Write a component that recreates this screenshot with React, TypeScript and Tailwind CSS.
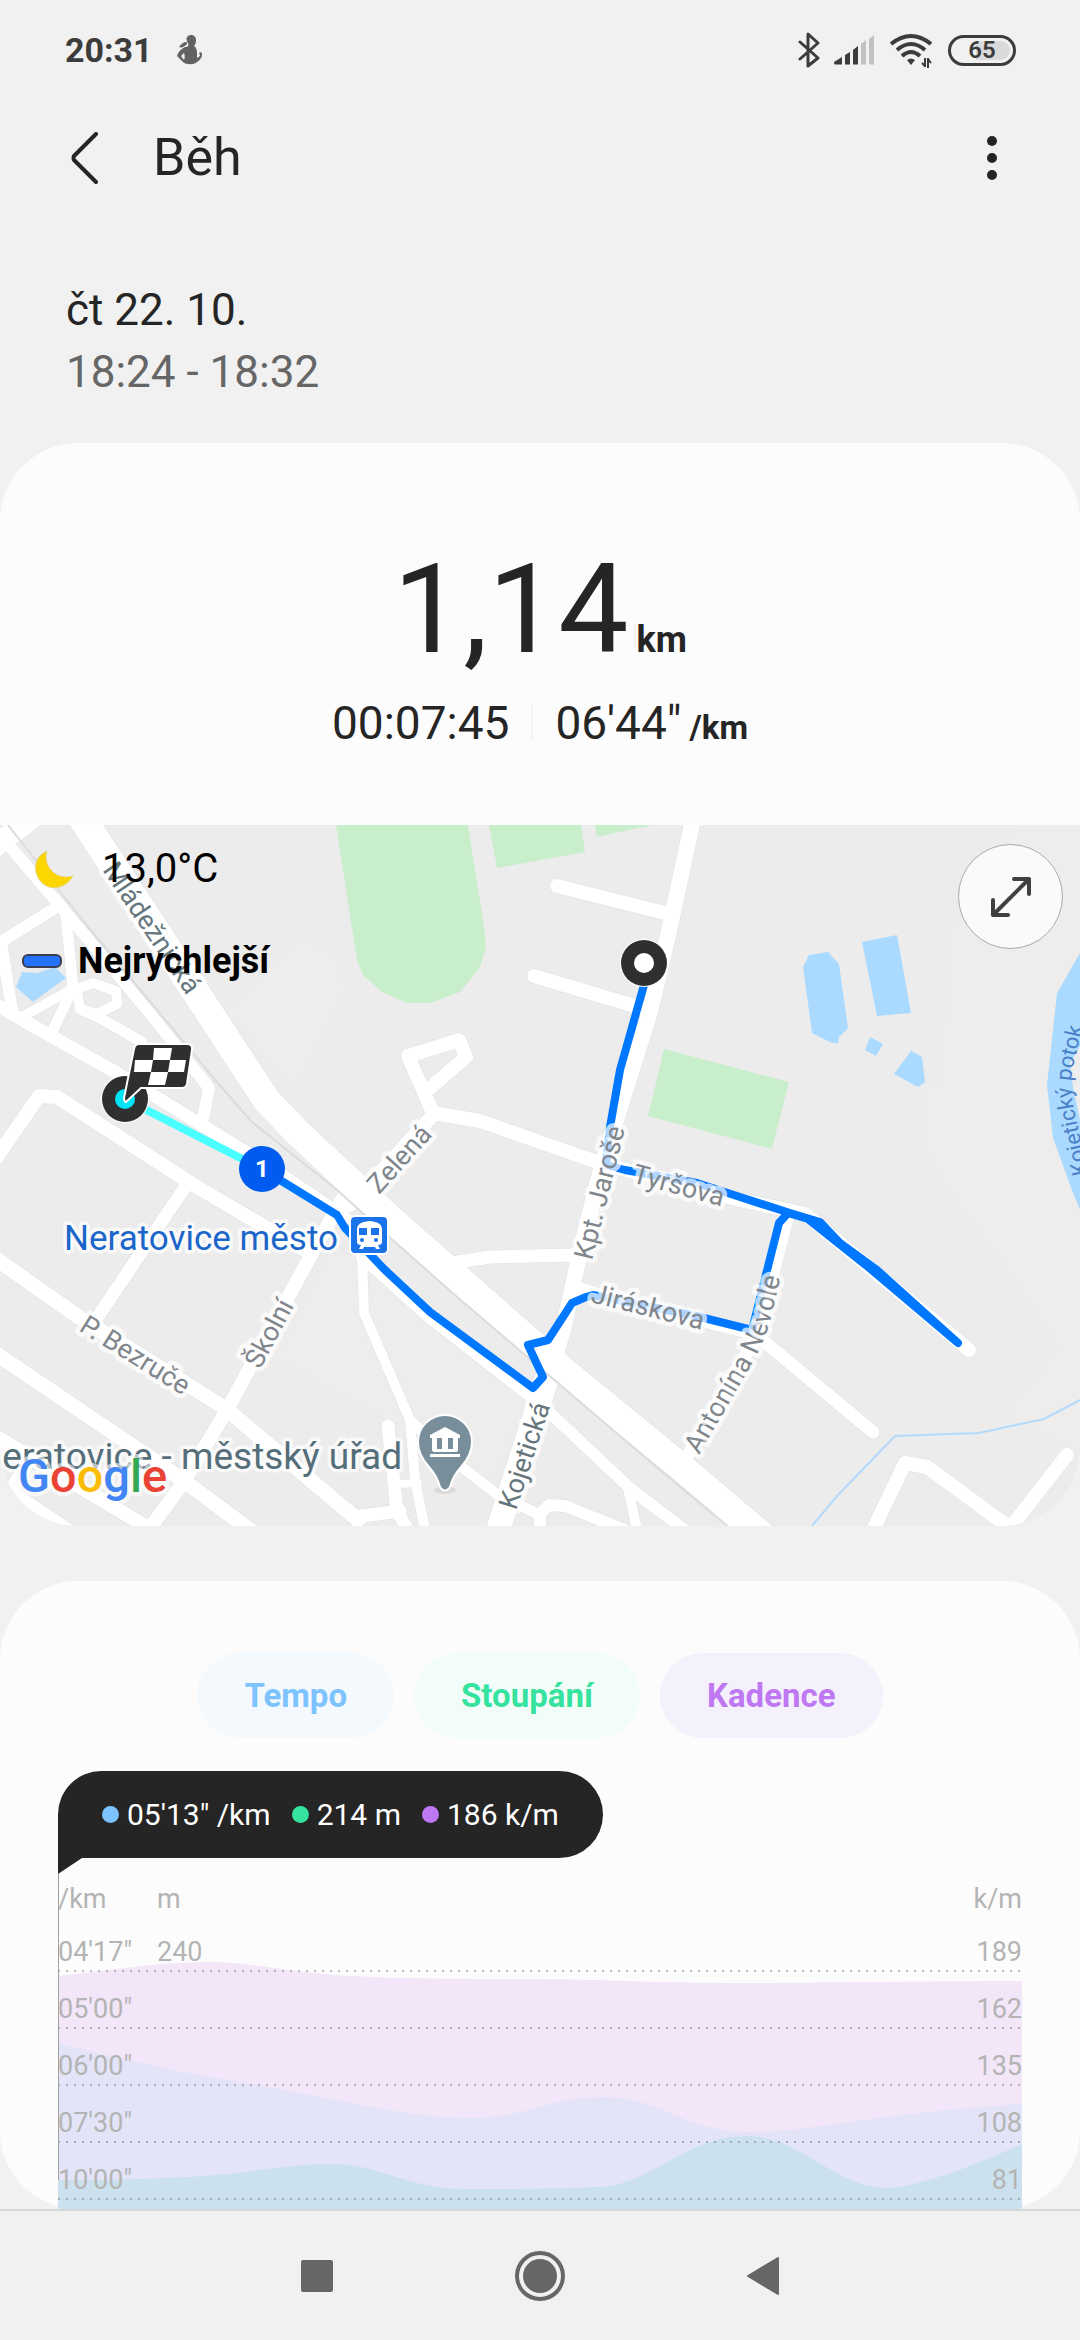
import React from 'react';

const axisRows = [
    { pace: "04'17\"", elevation: '240', cadence: '189' },
    { pace: "05'00\"", elevation: '', cadence: '162' },
    { pace: "06'00\"", elevation: '', cadence: '135' },
    { pace: "07'30\"", elevation: '', cadence: '108' },
    { pace: "10'00\"", elevation: '', cadence: '81' },
];

const gridLines = [97, 154, 211, 268, 325];

const tooltipValues = [
    { value: "05'13\" /km", dot: 'bg-[#7cc3ff]' },
    { value: '214 m', dot: 'bg-[#35e29e]' },
    { value: '186 k/m', dot: 'bg-[#bf78f2]' },
];

const series = [
    { label: 'Tempo', className: 'bg-[#f4f9fd] text-[#7cc3ff]' },
    { label: 'Stoupání', className: 'bg-[#f2fdf9] text-[#35e29e]' },
    { label: 'Kadence', className: 'bg-[#f4f0fc] text-[#bf78f2]' },
];

// Map geometry, widest roads first
const roads = [
    { width: 28, d: 'M80 815L267 1101L300 1135L387 1216L560 1368L680 1466L760 1534' },
    { width: 24, d: 'M548 1375L536 1412L498 1530' },
    { width: 22, d: 'M-10 850L45 808' },
    { width: 16, d: 'M694 815L667 940L650 1012L616 1120L598 1180L578 1262L563 1330L548 1380' },
    { width: 15, d: 'M-5 1258L80 1318L225 1408L358 1520' },
    { width: 15, d: 'M-5 1353L180 1478L250 1530' },
    { width: 14, d: 'M-5 1436L145 1526' },
    { width: 14, d: 'M28 1462L5 1500' },
    { width: 18, d: 'M-5 1484L70 1534' },
    { width: 14, d: 'M-8 1164L39 1096L57 1097L197 1187L308 1252' },
    { width: 13, d: 'M185 1187L97 1318' },
    { width: 14, d: 'M344 1196L310 1257L227 1410L183 1483L147 1532' },
    { width: 12, d: 'M6 842L62 908L118 975L165 1032L209 1088L202 1124' },
    { width: 12, d: 'M60 905L1 942L12 1010' },
    { width: 13, d: 'M-5 1004L33 1026L117 1073L262 1162L345 1218' },
    { width: 11, d: 'M66 915L73 988L51 1034' },
    { width: 10, d: 'M74 988L20 1018' },
    { width: 10, d: 'M74 990L93 983L116 991L117 1004L97 1014L80 1009L77 990' },
    { width: 11, d: 'M80 1009L100 1018L142 1042' },
    { width: 10, d: 'M362 1255L364 1313L410 1420L415 1480L425 1530' },
    { width: 13, d: 'M388 1426L397 1511L408 1530' },
    { width: 13, d: 'M355 1517L400 1511' },
    { width: 8, d: 'M400 1484L418 1483' },
    { width: 11, d: 'M413 1423L463 1468L498 1495L538 1514' },
    { width: 12, d: 'M540 1530L540 1514L549 1505L565 1506L625 1530' },
    { width: 12, d: 'M362 1257L430 1318L530 1396L549 1412L632 1490L690 1534' },
    { width: 10, d: 'M628 1488L637 1530' },
    { width: 14, d: 'M557 886L665 913' },
    { width: 14, d: 'M534 976L645 1009' },
    { width: 14, d: 'M430 1088L466 1057L459 1040L408 1056L433 1113' },
    { width: 14, d: 'M433 1113L480 1121L600 1163L740 1200L805 1214L969 1350' },
    { width: 14, d: 'M435 1113L350 1205' },
    { width: 13, d: 'M572 1286L593 1293L755 1334L873 1432' },
    { width: 13, d: 'M788 1215L757 1335L688 1455' },
    { width: 13, d: 'M445 1264L490 1257L577 1255' },
    { width: 14, d: 'M872 1532L905 1463L927 1467L1010 1528L1067 1455' },
];

const greens = [
    'M336 825L357 960L363 975L382 992L407 1003H430L460 992L480 967L486 947L485 933L468 825Z',
    'M489 825L497 868L585 852L581 825Z',
    'M595 825L597 837L653 825Z',
    'M664 1049L789 1082L772 1149L648 1116Z',
];

const waters = [
    'M22 972L37 973L55 967L66 978L33 1002L16 987Z',
    'M809 955L828 952L839 964L848 1028L839 1037L838 1043H832L812 1033L803 967Z',
    'M862 942L897 935L911 1013L877 1016Z',
    'M870 1037L883 1044L876 1056L865 1050Z',
    'M911 1051L922 1057L925 1082L918 1087L894 1074Z',
    'M1080 953L1057 993L1047 1085L1053 1138L1072 1190L1080 1210V1120L1073 1087L1070 1063L1080 1046Z',
];

const routePath =
    'M644 985L620 1070L610 1127L606 1165L625 1170L697 1183L740 1197L790 1213L820 1222L840 1243L877 1270L958 1343L867 1266L808 1219L788 1213L779 1223L752 1330L700 1317L593 1295L586 1297L572 1303L548 1340L528 1345L543 1377L533 1388L430 1312L384 1269L345 1228L337 1215L262 1169';

const streetLabels = [
    { text: 'Mládežnická', transform: 'translate(102 870) rotate(56)', fill: '#65767d' },
    { text: 'Zelená', transform: 'translate(379 1195) rotate(-48)', fill: '#80868b' },
    { text: 'Kpt. Jaroše', transform: 'translate(592 1261) rotate(-76)', fill: '#80868b' },
    { text: 'Tyršova', transform: 'translate(631 1182) rotate(15)', fill: '#80868b' },
    { text: 'Jiráskova', transform: 'translate(590 1302) rotate(14)', fill: '#80868b' },
    { text: 'Kojetická', transform: 'translate(516 1511) rotate(-72)', fill: '#65767d' },
    { text: 'Školní', transform: 'translate(260 1370) rotate(-62)', fill: '#80868b' },
    { text: 'P. Bezruče', transform: 'translate(78 1330) rotate(32)', fill: '#80868b' },
];

const StatusBar: React.FC = () => (
    <div className="flex h-[100px] items-center justify-between pr-16 pl-[65px] text-[#3c3c3c]">
        <div className="flex items-center gap-6">
            <span className="text-[34px] font-bold">20:31</span>
            <svg className="h-[30px] w-[26px]" viewBox="0 0 26 30" fill="#626262">
                <path d="M14 0c3 0 5 2 5 5s-1 5-2 6c2 1 3 4 3 7v5c2-1 3-2 3-3l-1-2c1-1 3-1 3 1 0 4-2 6-5 8-3 3-11 3-14 0L0 21c1-4 4-7 8-9 3 0 4-1 3-4-3-4-1-8 3-8zM7 18l-3 3 3 4c1-2 1-5 0-7z" />
                <path d="M10 7c-4 0-6 2-8 5 3 1 5 0 8-3z" />
            </svg>
        </div>
        <div className="flex items-center">
            <svg className="mr-3.5 h-[36px] w-[22px]" viewBox="0 0 22 36" fill="none" stroke="currentColor" strokeWidth="3" strokeLinejoin="round" strokeLinecap="round">
                <path d="M2 10L20 26L10 34V2L20 11L2 27" />
            </svg>
            <svg className="mr-4 h-[30px] w-[40px]" viewBox="0 0 40 30" fill="currentColor">
                <path d="M0 27L8 22V29.500H1Q0 29 0 27zM11 20L16 17V29.500H11zM19 15L24 11V29.500H19z" />
                <path fill="#c2c2c2" d="M27 9L32 5V29.500H27zM35 4L40 0V29.500H35z" />
            </svg>
            <svg className="mr-4 h-[36px] w-[42px]" viewBox="0 0 42 36" fill="none" stroke="currentColor" strokeWidth="4">
                <path d="M1 12Q21-4 41 12M7 18Q21 6 35 18M12 24Q21 16 30 24" />
                <path d="M17 28Q21 25 25 28L21 33Z" fill="currentColor" stroke="none" />
                <path d="M35 26V35M32 31L35 34M38 26V36M38 27L41 31" strokeWidth="2" />
            </svg>
            <div className="flex h-[31px] w-[68px] items-center justify-center rounded-full border-3 border-[#3c3c3c] bg-linear-to-r from-transparent from-40% to-[#dadada] to-40% bg-clip-content p-[3px] text-2xl leading-none font-semibold">
                65
            </div>
        </div>
    </div>
);

const TitleBar: React.FC = () => (
    <header className="flex h-[116px] items-center pr-[76px] pl-[70px]">
        <button type="button" aria-label="Zpět" className="mr-[54px]">
            <svg className="h-[52px] w-[29px]" viewBox="0 0 29 52" fill="none" stroke="#252525" strokeWidth="4" strokeLinecap="round" strokeLinejoin="round">
                <path d="M26 2L4 24Q3 26 4 28L26 50" />
            </svg>
        </button>
        <h1 className="flex-1 text-[52px] leading-none">Běh</h1>
        <button type="button" aria-label="Další možnosti" className="flex w-6 flex-col items-center gap-[7px] py-2">
            <span className="size-2.5 rounded-full bg-[#252525]" />
            <span className="size-2.5 rounded-full bg-[#252525]" />
            <span className="size-2.5 rounded-full bg-[#252525]" />
        </button>
    </header>
);

const RouteMap: React.FC = () => (
    <div className="relative">
        <svg className="block h-[701px] w-full" viewBox="0 825 1080 701" preserveAspectRatio="xMidYMid slice">
            <rect x="0" y="825" width="1080" height="701" fill="#ececec" />
            <g fill="#eeedeb">
                <path d="M1011 825L1005 870L950 930L941 1075L927 1090L922 1145L940 1180L997 1257L1057 1347L1007 1413L1080 1455V825Z" />
                <path d="M225 1010L293 943L330 945L348 990L295 1095Z" />
                <path d="M325 1255L362 1255L530 1395L490 1490L400 1425L275 1360Z" />
            </g>
            {greens.map((d) => <path key={d} d={d} fill="#c9eecb" />)}
            {waters.map((d) => <path key={d} d={d} fill="#aadaff" />)}
            <path d="M812 1526L838 1495L895 1436L979 1433L1044 1419L1080 1400" fill="none" stroke="#b3dafa" strokeWidth="2" />

            <g fill="none" strokeLinecap="round" strokeLinejoin="round">
                {roads.map((r) => <path key={r.d} d={r.d} stroke="#dfe1e4" strokeWidth={r.width + 1} />)}
                {roads.map((r) => <path key={r.d} d={r.d} stroke="#fff" strokeWidth={r.width} />)}
                <path d="M8 825L80 917L148 999L217 1082L252 1122L337 1190L387 1235L456 1296L579 1401L661 1471L732 1530" stroke="#dadce0" strokeWidth="2" />
            </g>

            <g fill="none" strokeWidth="8" strokeLinejoin="round">
                <path d={routePath} stroke="#0077ff" />
                <path d="M262 1169L125 1099" stroke="#4affff" />
            </g>

            <g fontSize="27" stroke="#fff" strokeOpacity="0.7" strokeWidth="9" strokeLinejoin="round" paintOrder="stroke">
                {streetLabels.map((l) => (
                    <text key={l.text} transform={l.transform} fill={l.fill}>{l.text}</text>
                ))}
                <path id="nevole" d="M699 1455L753 1362Q766 1338 771 1318L789 1240" fill="none" stroke="none" />
                <text fill="#80868b"><textPath href="#nevole">Antonína Nevole</textPath></text>
            </g>
            <path id="potok" d="M1088 1174L1077 1122Q1069 1090 1072 1072L1085 1015" fill="none" />
            <text fontSize="22" fill="#4a80c8"><textPath href="#potok">Kojetický potok</textPath></text>

            <g stroke="#fff" strokeOpacity="0.7" strokeWidth="7" strokeLinejoin="round" paintOrder="stroke">
                <text x="64" y="1250" fontSize="35" fill="#1b66ca">Neratovice město</text>
                <text x="402" y="1469" fontSize="37" fill="#546e7a" textAnchor="end">Neratovice - městský úřad</text>
            </g>

            {/* railway station */}
            <rect x="350" y="1216" width="38" height="38" rx="5" fill="#1a73e8" stroke="#fff" strokeWidth="2" />
            <path d="M357 1229Q357 1222 369 1221Q382 1222 382 1229V1242Q382 1245 378 1245L380 1249H376L375 1247H364L363 1249H359L361 1245Q357 1245 357 1242Z" fill="#fff" />
            <path d="M359 1228H367V1235H359ZM371 1228H379V1235H371Z" fill="#1a73e8" />
            <circle cx="362" cy="1240" r="2" fill="#1a73e8" />
            <circle cx="376" cy="1240" r="2" fill="#1a73e8" />

            {/* town hall pin */}
            <ellipse cx="445" cy="1490" rx="11" ry="4" fill="#dadada" />
            <path d="M440 1487Q437 1476 429 1467Q418 1455 418 1442A27 27 0 0 1 472 1442Q472 1455 461 1467Q453 1476 450 1487Q445 1494 440 1487Z" fill="#788f9b" stroke="#fff" strokeWidth="2" />
            <path d="M430 1435L445 1427L460 1435V1438H430ZM432 1438H437V1451H432ZM442 1438H448V1451H442ZM453 1438H458V1451H453ZM430 1454H460V1457H430Z" fill="#fff" />
            <path d="M433 1449H457V1452H433Z" fill="#fff" />

            {/* start marker */}
            <circle cx="644" cy="963" r="24" fill="#fff" />
            <circle cx="644" cy="963" r="23" fill="#2f2f2f" />
            <circle cx="644" cy="963" r="10" fill="#fff" />

            {/* first kilometre */}
            <circle cx="262" cy="1169" r="23" fill="#005cf0" />
            <text x="262" y="1177" fontSize="24" fontWeight="700" fill="#fff" textAnchor="middle">1</text>

            {/* finish marker */}
            <circle cx="125" cy="1099" r="24" fill="#fff" />
            <circle cx="125" cy="1099" r="23" fill="#2f2f2f" />
            <circle cx="125" cy="1099" r="10" fill="#00e4f8" />
            <path d="M139 1044H187Q193 1044 192 1050L187 1084Q186 1088 182 1088H141L126 1102Q124 1102 124 1098L134 1049Q135 1044 139 1044Z" fill="#2f2f2f" stroke="#fff" strokeWidth="2" />
            <path d="M154 1048H172L170 1060H186L184 1072H168L165 1085H148L151 1072H134L135 1060H153ZM153 1060L151 1072H168L170 1060Z" fill="#fff" fillRule="evenodd" />

            <text x="18" y="1492" fontSize="47" fontWeight="500" stroke="#fff" strokeOpacity="0.6" strokeWidth="8" strokeLinejoin="round" paintOrder="stroke">
                <tspan fill="#4285f4">G</tspan>
                <tspan fill="#ea4335">o</tspan>
                <tspan fill="#fbbc05">o</tspan>
                <tspan fill="#4285f4">g</tspan>
                <tspan fill="#34a853">l</tspan>
                <tspan fill="#ea4335">e</tspan>
            </text>
        </svg>

        <div className="absolute top-5 left-[22px] text-black">
            <div className="flex h-12 items-center">
                <svg className="mr-7 ml-3 h-[40px] w-[40px]" viewBox="0 0 40 40" fill="#fdd600" stroke="#e6d58a" strokeWidth="1">
                    <path d="M13 2C4 6 0 14 2 23C5 36 17 42 28 37C33 35 37 31 39 27C31 29 23 28 17 21C12 15 11 8 13 2Z" />
                </svg>
                <span className="text-[40px] leading-none">13,0°C</span>
            </div>
            <div className="mt-11 flex h-12 items-center gap-4">
                <span className="h-3.5 w-10 rounded-md border-2 border-[#3a4050] bg-[#2272fb]" />
                <span className="text-4xl leading-none font-bold">Nejrychlejší</span>
            </div>
        </div>
        <button type="button" aria-label="Zvětšit mapu" className="absolute top-[19px] right-[17px] flex size-[105px] items-center justify-center rounded-full border border-[#a8a8a8] bg-[#fafafa]">
            <svg className="size-[42px]" viewBox="0 0 42 42" fill="none" stroke="#404040" strokeWidth="4" strokeLinecap="round" strokeLinejoin="round">
                <path d="M3 39L39 3M24 3H39V18M3 24V39H18" />
            </svg>
        </button>
    </div>
);

const WorkoutSummary: React.FC = () => (
    <section className="overflow-hidden rounded-[78px] bg-[#fcfcfc]">
        <div className="flex flex-col items-center pt-[104px] pb-[72px]">
            <div className="flex items-baseline gap-2">
                <span className="text-[125px] leading-[125px]">1,14</span>
                <span className="text-4xl leading-none font-bold">km</span>
            </div>
            <div className="mt-[21px] flex h-[60px] items-baseline gap-[22px] text-[46px] leading-[60px]">
                <span>00:07:45</span>
                <span className="h-9 w-0.5 self-center bg-[#f3f3f3]" />
                <span className="flex items-baseline gap-2">
                    06'44"
                    <span className="text-[33px] leading-none font-bold">/km</span>
                </span>
            </div>
        </div>
        <RouteMap />
    </section>
);

const WorkoutChart: React.FC = () => (
    <section className="mt-[55px] rounded-[78px] bg-[#fcfcfc] px-[58px] pt-[72px]">
        <div className="flex justify-center gap-5">
            {series.map((s) => (
                <button key={s.label} type="button" className={`h-[85px] rounded-full px-[47px] text-[33px] font-bold ${s.className}`}>
                    {s.label}
                </button>
            ))}
        </div>

        <div className="mt-[33px] flex h-[87px] w-fit items-center gap-[21px] rounded-[44px] rounded-bl-none bg-[#252525] px-11 text-[30px] text-white">
            {tooltipValues.map((t) => (
                <span key={t.value} className="flex items-center gap-2">
                    <span className={`size-[17px] rounded-full ${t.dot}`} />
                    {t.value}
                </span>
            ))}
        </div>
        <svg className="block h-4 w-6" viewBox="0 0 24 16" fill="#252525">
            <path d="M0 0H24L0 16Z" />
        </svg>

        <div className="relative text-[27px] text-[#b4b4b4]">
            <svg className="absolute inset-0 size-full" viewBox="0 0 964 335" preserveAspectRatio="none">
                <path fill="#f2e6f8" d="M0 102C50 97 100 88 147 88C190 88 220 96 265 100C320 105 400 105 482 105C560 106 600 109 682 109C760 109 860 107 964 107V335H0Z" />
                <path fill="#e3e4f8" d="M0 169C70 187 130 200 192 210C270 223 350 244 412 244C470 244 490 223 547 223C600 223 630 258 687 258C760 258 800 241 964 230V335H0Z" />
                <path fill="#cce1ee" d="M0 306C60 306 120 305 180 299C210 295 240 290 277 290C320 290 350 315 407 315C450 315 520 315 552 312C600 304 630 262 690 262C740 262 780 314 827 314C860 314 920 290 964 270V335H0Z" />
                {gridLines.map((y) => (
                    <line key={y} x1="0" x2="964" y1={y} y2={y} stroke="#787878" strokeOpacity="0.5" strokeWidth="2" strokeDasharray="2 6" />
                ))}
                <line x1="0" x2="0" y1="0" y2="306" stroke="#a0a0a0" strokeWidth="2" />
            </svg>
            <div className="relative flex h-[50px] items-center">
                <span className="w-[99px]">/km</span>
                <span className="flex-1">m</span>
                <span>k/m</span>
            </div>
            {axisRows.map((row) => (
                <div key={row.pace} className="relative flex h-[57px] items-center">
                    <span className="w-[99px]">{row.pace}</span>
                    <span className="flex-1">{row.elevation}</span>
                    <span>{row.cadence}</span>
                </div>
            ))}
        </div>
    </section>
);

const NavigationBar: React.FC = () => (
    <nav className="mt-auto flex h-[131px] items-center justify-center gap-[173px] border-t-2 border-[#d8d8d8]">
        <button type="button" aria-label="Poslední aplikace" className="flex size-[50px] items-center justify-center">
            <span className="size-8 rounded-xs bg-[#666]" />
        </button>
        <button type="button" aria-label="Domů" className="flex size-[50px] items-center justify-center rounded-full border-4 border-[#666]">
            <span className="size-[34px] rounded-full bg-[#666]" />
        </button>
        <button type="button" aria-label="Zpět" className="flex size-[50px] items-center justify-center">
            <svg className="h-[38px] w-[32px]" viewBox="0 0 32 38" fill="#666" stroke="#666" strokeWidth="2" strokeLinejoin="round">
                <path d="M1 19L31 1V37Z" />
            </svg>
        </button>
    </nav>
);

const App: React.FC = () => (
    <div className="flex min-h-screen flex-col bg-[#f1f1f1] font-[Roboto,sans-serif] text-[#252525]">
        <StatusBar />
        <TitleBar />
        <div className="px-[66px] pt-[63px] pb-10 text-[44px] leading-[62px]">
            <p>čt 22. 10.</p>
            <p className="text-[#666]">18:24 - 18:32</p>
        </div>
        <WorkoutSummary />
        <WorkoutChart />
        <NavigationBar />
    </div>
);

export default App;
